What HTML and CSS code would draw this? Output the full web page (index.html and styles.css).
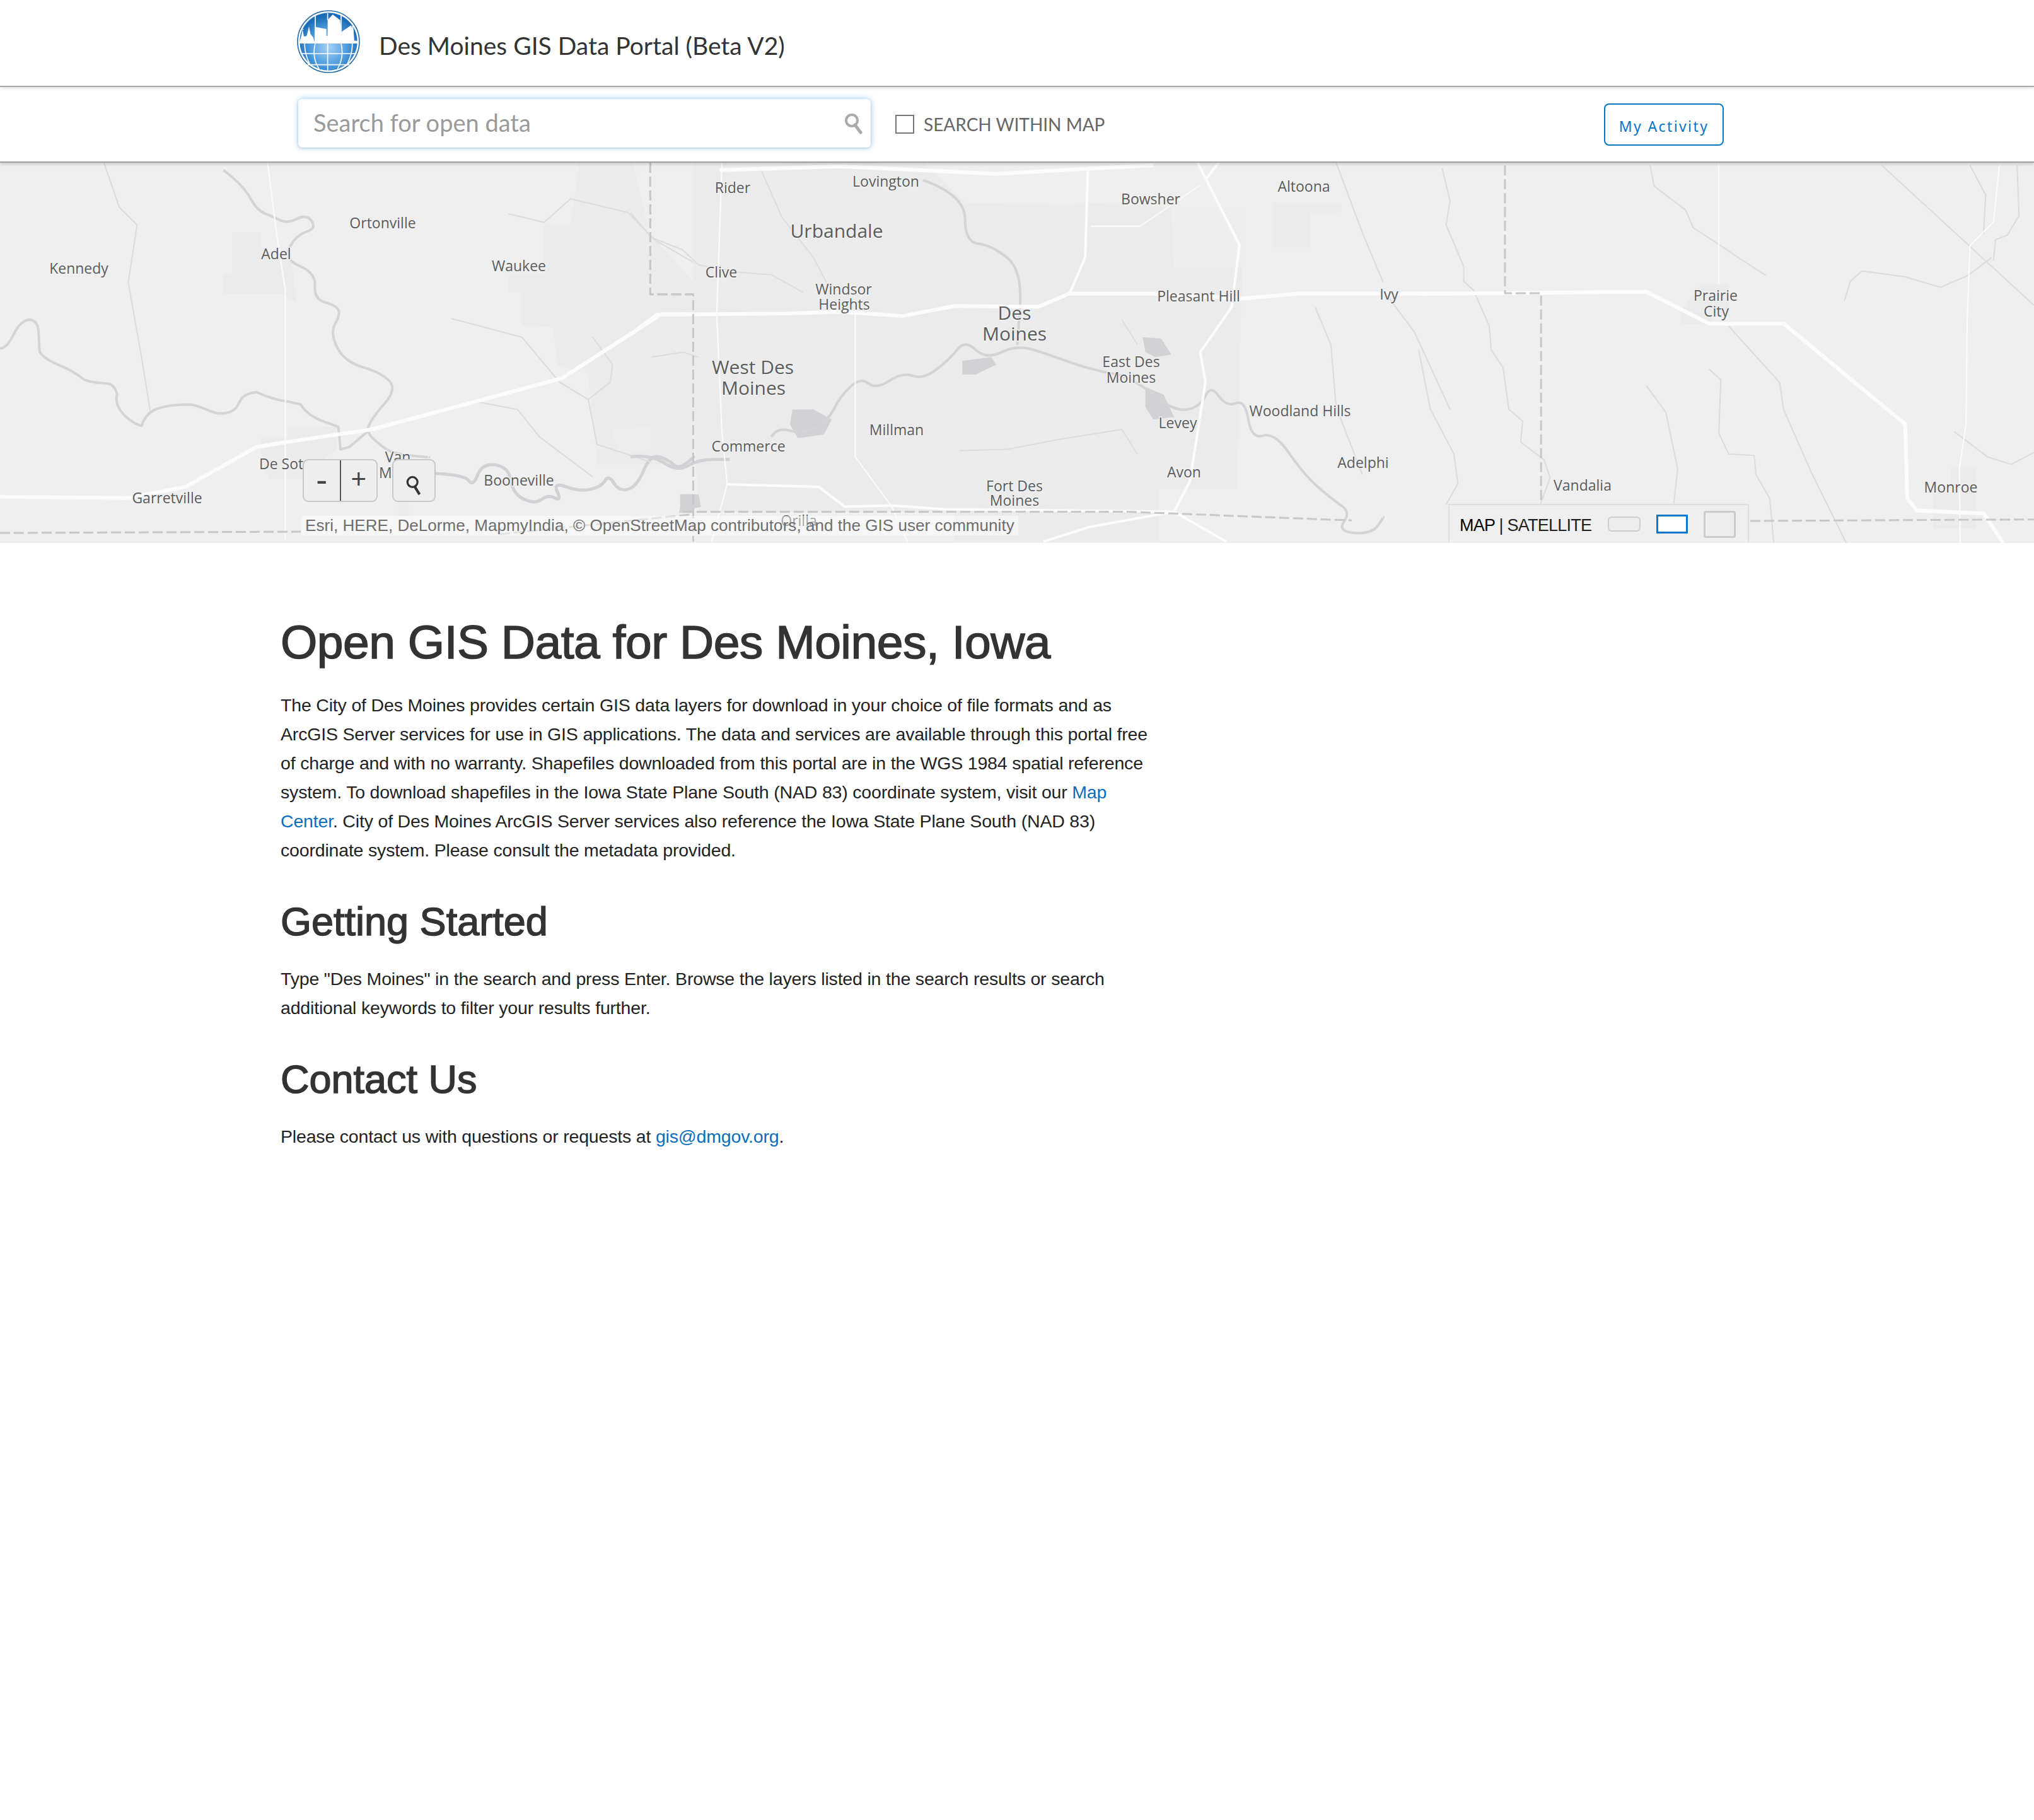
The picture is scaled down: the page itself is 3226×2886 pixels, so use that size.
FILE: index.html
```html
<!DOCTYPE html>
<html lang="en">
<head>
    <meta charset="UTF-8">
    <title>Des Moines GIS Data Portal (Beta V2)</title>
    <link rel="stylesheet" href="styles.css">
</head>
<body>
    <header class="site-header">
        <div class="wrap header-row">
            <svg class="logo" viewBox="35 25 300 300">
                <defs>
                    <radialGradient id="globe" cx="0.5" cy="0.6" r="0.55">
                        <stop offset="0" stop-color="#a6d2f4"/>
                        <stop offset="0.6" stop-color="#4a9ade"/>
                        <stop offset="1" stop-color="#1a6cb6"/>
                    </radialGradient>
                </defs>
                <circle cx="185" cy="175" r="147" fill="#fff" stroke="#2a6fa8" stroke-width="5"/>
                <circle cx="185" cy="175" r="137" fill="url(#globe)"/>
                <path d="M46 180 L55 150 L62 118 L68 150 L76 150 L82 146 L92 104 L100 140 L112 155 L119 178 L122 105 L175 115 L175 148 L181 148 L181 72 L205 46 L240 72 L245 130 L292 98 L305 125 L305 170 L324 172 L324 184 L46 184 Z" fill="#fff"/>
                <path d="M122 50 L122 178 M181 40 L181 72 M245 50 L245 130 M64 115 L64 118 M300 100 L305 170" stroke="#fff" stroke-width="5" fill="none"/>
                <path d="M122 184 Q105 250 140 305 M181 184 L181 312 M245 184 Q260 250 228 305 M72 184 Q70 230 95 280 M298 184 Q300 230 275 280 M52 232 L318 232 M85 285 L285 285" stroke="#fff" stroke-width="5" fill="none"/>
            </svg>
            <div class="site-title">Des Moines GIS Data Portal (Beta V2)</div>
        </div>
    </header>

    <div class="toolbar">
        <div class="wrap toolbar-row">
            <div class="search-box">
                <span class="search-placeholder">Search for open data</span>
                <svg class="search-icon" viewBox="0 0 30 34">
                    <circle cx="12" cy="12" r="9" fill="none" stroke="#aaa" stroke-width="4"/>
                    <path d="M17 19 L26 31" stroke="#aaa" stroke-width="5" stroke-linecap="round"/>
                </svg>
            </div>
            <label class="within-map"><span class="checkbox"></span>SEARCH WITHIN MAP</label>
            <button class="activity-btn">My Activity</button>
        </div>
    </div>

    <section class="map">
        <svg class="basemap" viewBox="0 258 3226 603">
            <!-- west sheet -->
            <g transform="translate(0,250) scale(0.7015,0.3954)">
                <path class="urban" d="M525 300 L590 300 L590 360 L660 420 L670 580 L640 545 L505 545 L505 470 L525 460 Z"/>
                <path class="urban" d="M1230 270 L1290 270 L1310 20 L1430 20 L1468 300 L1568 500 L1568 1230 L1350 1230 L1330 870 L1260 830 L1250 680 L1180 670 L1180 540 L1150 540 L1150 470 L1230 470 Z"/>
                <path class="urban" d="M590 1120 L650 1120 L650 1080 L760 1080 L760 1170 L680 1290 L610 1290 L590 1200 Z"/>
                <path class="urban" d="M900 1380 L925 1380 L925 1440 L900 1440 Z"/>
                <path class="urban-lite" d="M1385 1090 L1470 1080 L1470 1170 L1400 1190 Z"/>
                <path class="lake" d="M1545 1350 L1568 1350 L1568 1425 L1535 1425 Z"/>
                <path class="river-thin" d="M235 20 L270 200 L310 270 L290 500 L320 800 L340 1020"/>
                <path class="river" d="M0 765 C30 760 30 660 65 650 C95 650 85 720 90 780 C110 830 150 830 190 890 C230 920 255 880 265 950 C255 1010 300 1070 320 1075 C330 1020 350 990 430 990 C470 1000 480 1040 520 1020 C550 1000 530 950 580 940 C620 975 650 975 680 990 C700 1050 740 1060 765 1080 L770 1170 L790 1160 L830 1100"/>
                <path class="river" d="M505 50 Q550 110 565 160 T600 225 T635 252 T672 245 T705 255 T692 298 T655 360 T678 435 T712 515 T735 580 T765 610 T758 665 T762 760 T820 840 T880 895 T870 985 T835 1070 T840 1120 T870 1165 T930 1195 T970 1200"/>
                <path class="river-wide" d="M970 1265 Q1050 1270 1060 1295 T1080 1272 T1120 1232 T1155 1295 T1185 1370 T1225 1370 T1255 1365 T1260 1340 T1280 1320 T1335 1330 T1368 1295 T1388 1305 T1420 1330 T1455 1255 T1490 1200 T1522 1230 T1552 1225 T1568 1200"/>
                <path class="river-thin" d="M1150 225 L1230 260 L1290 165 L1420 220 L1480 330 L1568 420"/>
                <path class="river-thin" d="M1020 645 L1180 720 L1265 900 L1330 970 L1350 1150 L1470 1220"/>
                <path class="river-thin" d="M1080 980 L1170 1010 L1220 1120 L1340 1280"/>
                <path class="river-thin" d="M1340 720 L1385 830 L1380 900 L1330 970"/>
                <path class="road-thin" d="M605 20 L625 300 L645 530 L645 1530"/>
                <path class="road" d="M0 1360 L290 1365 L420 1320 L580 1160 L650 1140 L840 1090 L1270 885 L1495 628 L1568 628"/>
                <path class="county" d="M1470 20 L1470 548 L1568 548"/>
                <path class="county" d="M0 1505 L680 1500 M1130 1510 L1568 1430"/>
            </g>
            <!-- centre sheet -->
            <g transform="translate(1000,250) scale(0.829,0.3954)">
                <path class="urban" d="M120 20 L560 20 L640 180 L840 190 L880 180 L1035 200 L1040 440 L1170 440 L1160 1330 L1010 1330 L1010 1540 L620 1540 L620 1420 L130 1420 L120 1000 L0 1000 L0 720 L120 630 Z"/>
                <path class="urban" d="M540 1140 L630 1140 L630 1300 L500 1300 Z"/>
                <path class="urban-lite" d="M1040 200 L1170 200 L1170 440 L1040 440 Z"/>
                <path class="urban" d="M1230 180 L1360 180 L1360 220 L1300 220 L1300 360 L1230 360 Z"/>
                <path class="lake" d="M310 1010 L350 1010 L385 1050 L370 1110 L320 1125 L305 1070 Z"/>
                <path class="lake" d="M635 815 L690 800 L700 830 L660 870 L635 870 Z"/>
                <path class="lake" d="M980 720 L1015 725 L1035 790 L1005 800 L985 780 Z"/>
                <path class="lake" d="M985 920 L1020 950 L1040 1040 L1000 1050 L985 1000 Z"/>
                <path class="lake" d="M95 1350 L130 1350 L135 1400 L95 1420 Z"/>
                <path class="river-wide" d="M0 1200 Q40 1190 65 1225 T110 1235 T160 1210 T190 1210"/>
                <path class="river" d="M270 1120 Q280 1080 305 1095 T355 1080 T390 1005 T420 920 T455 905 T495 895 T540 875 T585 850 T625 770 T660 770 T710 780 T770 770 T840 820 T920 865 T1000 950 T1065 1010 T1100 955 T1125 955 T1158 985 T1182 1050 T1210 1115 T1260 1185 T1315 1320 T1360 1395 T1365 1460 T1385 1505 T1430 1475 T1440 1440"/>
                <path class="river" d="M560 90 Q640 150 640 245 T665 345 T720 400 T745 600 T740 750"/>
                <path class="river-thin" d="M0 220 L40 320 L100 370 L130 430 L210 460 L270 470 L330 540"/>
                <path class="river-thin" d="M250 50 L290 240 L350 400 L375 500"/>
                <path class="river-thin" d="M40 800 L100 780 L130 800"/>
                <path class="river-thin" d="M630 1175 L720 1170 L820 1130 L940 1090 L970 1190"/>
                <path class="river-thin" d="M1310 600 L1340 750 L1350 1000 L1400 1270"/>
                <path class="river-thin" d="M1450 560 L1500 700 L1568 1010"/>
                <path class="river-thin" d="M1350 20 L1400 300 L1440 500"/>
                <path class="river-thin" d="M940 650 L970 750"/>
                <path class="road-thin" d="M430 620 L430 1200 L500 1400 L530 1540"/>
                <path class="road-thin" d="M175 20 L165 630 L175 1100 L185 1310 L155 1540"/>
                <path class="road" d="M0 710 L50 630 L300 625 L400 618 L520 635 L620 595 L780 598 L840 545 L1000 545 L1170 565 L1280 545 L1568 545"/>
                <path class="road" d="M170 50 L400 35 L700 65 L870 45 L1000 30"/>
                <path class="road-mid" d="M875 45 L870 400 L840 545"/>
                <path class="road-mid" d="M1085 20 L1165 350 L1150 600 L1090 780 L1100 900 L1070 1300 L1040 1420 L880 1480 L790 1540"/>
                <path class="road-mid" d="M1125 20 L1100 90 M1040 1420 L1140 1540"/>
                <path class="road-thin" d="M880 275 L975 275 L1090 110"/>
                <path class="road-mid" d="M185 1310 L360 1320 L410 1400 L500 1395 L600 1410 L1040 1420"/>
                <path class="county" d="M38 20 L38 548 L120 548 L120 1540"/>
                <path class="county" d="M100 1420 L950 1420 L1380 1455"/>
            </g>
            <!-- east sheet -->
            <g transform="translate(2250,130) scale(0.6224,0.4719)">
                <path class="urban" d="M720 680 L790 680 L790 760 L730 815 L668 815 L668 770 Z"/>
                <path class="urban" d="M1310 1380 L1355 1380 L1355 1295 L1420 1295 L1420 1500 L1310 1500 Z"/>
                <path class="river-thin" d="M60 290 L80 400 L70 480 L115 620 L115 670 L140 700 L180 820 L185 900 L215 960 L230 1100 L265 1140 L260 1210 L320 1270 L335 1330 L310 1420"/>
                <path class="river-thin" d="M0 900 L30 1100 L90 1250 L100 1350 L70 1420"/>
                <path class="river-thin" d="M590 280 L600 350 L680 430 L700 490 L770 550 L820 595 L885 650"/>
                <path class="river-thin" d="M790 820 L920 1010 L930 1100 L1000 1310 L1090 1550"/>
                <path class="river-thin" d="M740 965 L770 1000 L765 1180 L790 1250 L855 1255 L860 1320 L895 1400 L905 1550"/>
                <path class="river-thin" d="M580 1020 L630 1110 L660 1300 L650 1420"/>
                <path class="river-thin" d="M1085 735 L1100 670 L1130 635 L1240 655 L1330 690 L1400 650 L1460 590"/>
                <path class="river-thin" d="M1405 280 L1445 380 L1440 500 L1440 510"/>
                <path class="river-thin" d="M1525 280 L1530 450 L1500 515 L1470 530 L1465 600"/>
                <path class="river-thin" d="M1180 280 L1568 750"/>
                <path class="river-thin" d="M1365 1175 L1450 1260 L1510 1285 L1568 1245"/>
                <path class="road-thin" d="M765 275 L765 680"/>
                <path class="road-thin" d="M1480 280 L1465 470 L1405 550 L1398 800 L1395 1150 L1378 1300 L1380 1550"/>
                <path class="road" d="M0 712 L580 705 L740 812 L930 812 L1240 1150 L1245 1400 L1270 1440 L1440 1450 L1490 1550"/>
                <path class="county" d="M220 280 L220 710 L312 710 L312 1415"/>
                <path class="county" d="M845 1475 L1568 1470"/>
            </g>
            <g class="labels">
                <text x="125" y="434">Kennedy</text>
                <text x="438" y="411">Adel</text>
                <text x="607" y="362">Ortonville</text>
                <text x="823" y="430">Waukee</text>
                <text x="265" y="798">Garretville</text>
                <text x="453" y="744">De Soto</text>
                <text x="631" y="733">Van</text>
                <text x="633" y="758">Meter</text>
                <text x="823" y="770">Booneville</text>
                <text x="1162" y="306">Rider</text>
                <text x="1405" y="296">Lovington</text>
                <text class="label-big" x="1327" y="377">Urbandale</text>
                <text x="1144" y="440">Clive</text>
                <text x="1338" y="467">Windsor</text>
                <text x="1339" y="491">Heights</text>
                <text class="label-big" x="1194" y="593">West Des</text>
                <text class="label-big" x="1195" y="626">Moines</text>
                <text class="label-big" x="1609" y="507">Des</text>
                <text class="label-big" x="1609" y="540">Moines</text>
                <text x="1187" y="716">Commerce</text>
                <text x="1422" y="690">Millman</text>
                <text x="1825" y="324">Bowsher</text>
                <text x="2068" y="304">Altoona</text>
                <text x="1901" y="478">Pleasant Hill</text>
                <text x="2203" y="475">Ivy</text>
                <text x="2721" y="477">Prairie</text>
                <text x="2722" y="502">City</text>
                <text x="1794" y="582">East Des</text>
                <text x="1794" y="607">Moines</text>
                <text x="1868" y="679">Levey</text>
                <text x="2062" y="660">Woodland Hills</text>
                <text x="2162" y="742">Adelphi</text>
                <text x="1878" y="757">Avon</text>
                <text x="1609" y="779">Fort Des</text>
                <text x="1609" y="802">Moines</text>
                <text x="2510" y="778">Vandalia</text>
                <text x="3094" y="781">Monroe</text>
                <text x="1267" y="834">Orilla</text>
            </g>
        </svg>

        <div class="zoom-ctl">
            <span class="zoom-btn zoom-minus">-</span>
            <span class="zoom-btn">+</span>
        </div>
        <div class="zoom-search">
            <svg viewBox="0 0 30 36" width="28" height="34">
                <circle cx="12" cy="12" r="8.5" fill="none" stroke="#333" stroke-width="3.5"/>
                <path d="M16 20 L24 33" stroke="#333" stroke-width="4.5"/>
            </svg>
        </div>
        <div class="attribution">Esri, HERE, DeLorme, MapmyIndia, © OpenStreetMap contributors, and the GIS user community</div>
        <div class="basemap-toggle">
            <span class="toggle-text"><b>MAP</b> | SATELLITE</span>
            <span class="swatch swatch-small"></span>
            <span class="swatch swatch-active"></span>
            <span class="swatch swatch-large"></span>
        </div>
    </section>

    <main class="content">
        <h1>Open GIS Data for Des Moines, Iowa</h1>
        <p>The City of Des Moines provides certain GIS data layers for download in your choice of file formats and as ArcGIS Server services for use in GIS applications. The data and services are available through this portal free of charge and with no warranty. Shapefiles downloaded from this portal are in the WGS 1984 spatial reference system. To download shapefiles in the Iowa State Plane South (NAD 83) coordinate system, visit our <a href="#">Map Center</a>. City of Des Moines ArcGIS Server services also reference the Iowa State Plane South (NAD 83) coordinate system. Please consult the metadata provided.</p>
        <h2>Getting Started</h2>
        <p>Type "Des Moines" in the search and press Enter. Browse the layers listed in the search results or search additional keywords to filter your results further.</p>
        <h2>Contact Us</h2>
        <p>Please contact us with questions or requests at <a href="#">gis@dmgov.org</a>.</p>
    </main>
</body>
</html>
```

FILE: styles.css
```css
html, body {
    margin: 0;
    padding: 0;
    background-color: #ffffff;
}
body {
    font-family: "Liberation Sans", Arial, sans-serif;
    color: #222222;
}
.wrap {
    display: flex;
    width: 2263px;
    margin-left: 471px;
}

/* header */
.site-header {
    position: relative;
    height: 136px;
    border-bottom: 2px solid #a8a8a8;
    box-shadow: 0 2px 5px rgba(0, 0, 0, 0.12);
    z-index: 3;
}
.header-row {
    padding-top: 16px;
}
.logo {
    width: 100px;
    height: 100px;
}
.site-title {
    margin-left: 30px;
    font-family: Lato, "Noto Sans", sans-serif;
    font-size: 39px;
    line-height: 112px;
    color: #333333;
}

/* search bar */
.toolbar {
    position: relative;
    height: 118px;
    border-bottom: 2px solid #a0a0a0;
    box-shadow: 0 2px 5px rgba(0, 0, 0, 0.18);
    background-color: #ffffff;
    z-index: 2;
}
.toolbar-row {
    align-items: flex-start;
}
.search-box {
    display: flex;
    align-items: center;
    justify-content: space-between;
    box-sizing: border-box;
    width: 908px;
    height: 77px;
    margin-top: 19px;
    margin-left: 2px;
    padding: 0 12px 0 24px;
    border-radius: 6px;
    background-color: #ffffff;
    box-shadow: 0 0 10px rgba(102, 175, 233, 0.7), 0 1px 3px rgba(0, 0, 0, 0.15);
}
.search-placeholder {
    margin-bottom: 3px;
    font-family: Lato, "Noto Sans", sans-serif;
    font-size: 38px;
    color: #9a9a9a;
}
.search-icon {
    width: 30px;
    height: 34px;
}
.within-map {
    display: flex;
    align-items: center;
    height: 40px;
    margin-top: 39px;
    margin-left: 39px;
    font-family: Lato, "Noto Sans", sans-serif;
    font-size: 28px;
    color: #666666;
}
.checkbox {
    box-sizing: border-box;
    width: 30px;
    height: 30px;
    margin-right: 15px;
    border: 2px solid #777777;
}
.activity-btn {
    box-sizing: border-box;
    width: 190px;
    height: 67px;
    margin-top: 26px;
    margin-left: auto;
    padding: 4px 0 0;
    border: 2px solid #0a78c8;
    border-radius: 8px;
    background-color: #ffffff;
    font-family: "Noto Sans", sans-serif;
    font-size: 23px;
    letter-spacing: 2.4px;
    color: #0a74c4;
}

/* map */
.map {
    position: relative;
    height: 603px;
    overflow: hidden;
    background-color: #efefef;
}
.basemap {
    display: block;
    width: 3226px;
    height: 603px;
}
.basemap path {
    fill: none;
    vector-effect: non-scaling-stroke;
    stroke-linejoin: round;
}
.basemap .urban {
    fill: #ebebeb;
}
.basemap .urban-lite {
    fill: #eeeeee;
}
.basemap .lake {
    fill: #d2d2d6;
}
.river {
    stroke: #d4d4d7;
    stroke-width: 4px;
}
.river-wide {
    stroke: #d2d2d6;
    stroke-width: 5px;
}
.river-thin {
    stroke: #dcdcde;
    stroke-width: 2px;
}
.road {
    stroke: #fbfbfb;
    stroke-width: 6px;
}
.road-mid {
    stroke: #fbfbfb;
    stroke-width: 4px;
}
.road-thin {
    stroke: #fbfbfb;
    stroke-width: 2px;
}
.county {
    stroke: #c8c8c8;
    stroke-width: 3px;
    stroke-dasharray: 16 6;
}
.labels text {
    font-family: "Open Sans", "Noto Sans", sans-serif;
    font-size: 23px;
    fill: #5c5c5c;
    text-anchor: middle;
    paint-order: stroke;
    stroke: #f0f0f0;
    stroke-width: 3px;
}
.labels .label-big {
    font-size: 30px;
}
.zoom-ctl {
    position: absolute;
    left: 480px;
    top: 470px;
    display: flex;
    box-sizing: border-box;
    width: 119px;
    height: 68px;
    border: 2px solid #c8c8c8;
    border-radius: 9px;
    background-color: #eeeeee;
}
.zoom-btn {
    flex: 1;
    font-size: 42px;
    line-height: 60px;
    text-align: center;
    color: #444444;
}
.zoom-minus {
    border-right: 2px solid #555555;
    font-size: 54px;
}
.zoom-search {
    position: absolute;
    left: 622px;
    top: 470px;
    display: flex;
    align-items: flex-end;
    justify-content: center;
    box-sizing: border-box;
    width: 69px;
    height: 68px;
    padding-bottom: 7px;
    border: 2px solid #c8c8c8;
    border-radius: 9px;
    background-color: #eeeeee;
}
.attribution {
    position: absolute;
    left: 478px;
    top: 560px;
    padding: 0 6px;
    font-size: 26px;
    letter-spacing: 0.05px;
    line-height: 31px;
    color: #6e6e6e;
    background-color: rgba(255, 255, 255, 0.45);
}
.basemap-toggle {
    position: absolute;
    left: 2297px;
    top: 541px;
    display: flex;
    align-items: center;
    box-sizing: border-box;
    width: 477px;
    height: 62px;
    padding-left: 16px;
    border: 2px solid #e0e0e0;
    border-bottom: 0;
    background-color: #efefef;
}
.toggle-text {
    flex: none;
    width: 235px;
    margin-top: 5px;
    font-size: 27px;
    letter-spacing: -0.75px;
    color: #222222;
}
.toggle-text b {
    font-weight: normal;
    color: #000000;
}
.swatch {
    box-sizing: border-box;
    display: block;
    flex: none;
    background-color: #ececec;
    border: 2px solid #cccccc;
    border-radius: 4px;
}
.swatch-small {
    width: 52px;
    height: 24px;
    border-radius: 6px;
}
.swatch-active {
    width: 50px;
    height: 30px;
    margin-left: 25px;
    border: 3px solid #0a78c8;
    border-radius: 0;
    background-color: #ffffff;
}
.swatch-large {
    width: 51px;
    height: 43px;
    margin-left: 25px;
    border-width: 3px;
}

/* page text */
.content {
    width: 1390px;
    margin-left: 445px;
    padding-top: 114px;
    padding-bottom: 100px;
}
h1, h2 {
    margin: 0;
    font-weight: normal;
    color: #333333;
    -webkit-text-stroke: 1.5px #333333;
}
h1 {
    font-size: 75px;
    letter-spacing: -0.5px;
    line-height: 86px;
}
h2 {
    margin-top: 56px;
    font-size: 63px;
    line-height: 68px;
}
p {
    margin: 34px 0 0;
    font-size: 28.5px;
    letter-spacing: -0.18px;
    line-height: 46px;
}
a {
    color: #0a6ebd;
    text-decoration: none;
}
```
